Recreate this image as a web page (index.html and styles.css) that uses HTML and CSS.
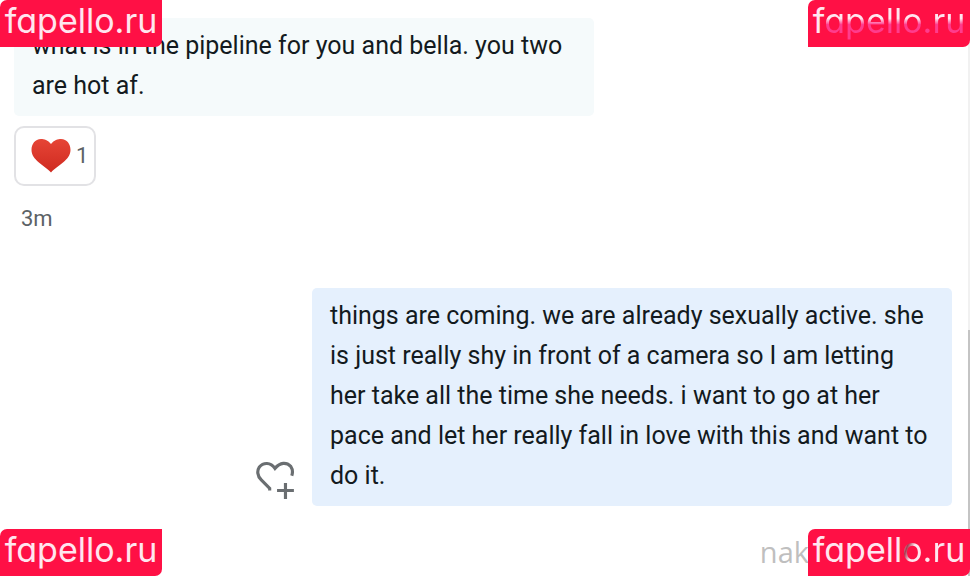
FILE: index.html
```
<!DOCTYPE html>
<html lang="en">
<head>
    <meta charset="UTF-8">
    <meta name="viewport" content="width=device-width, initial-scale=1.0">
    <title>Messages</title>
    <link rel="stylesheet" href="styles.css">
</head>
<body>
    <main class="chat">
        <div class="message received">
            <p class="bubble">what is in the pipeline for you and bella. you two are hot af.</p>
            <button class="reaction" type="button">
                <svg class="heart" viewBox="0 0 40 34" aria-hidden="true">
                    <defs>
                        <linearGradient id="heart-fill" x1="0" y1="0" x2="0" y2="1">
                            <stop offset="0" stop-color="#e64536"/>
                            <stop offset="1" stop-color="#cf2a20"/>
                        </linearGradient>
                    </defs>
                    <path fill="url(#heart-fill)" d="M20 5C23 1 27 0 30 0C36 0 39.500 5 39.500 11C39.500 21 27 26 20 33.500C13 26 .5 21 .5 11C.5 5 4 0 10 0C13 0 17 1 20 5Z"/>
                </svg>
                <span class="count">1</span>
            </button>
            <span class="time">3m</span>
        </div>
        <div class="message sent">
            <button class="like" type="button" aria-label="Add reaction">
                <svg viewBox="0 0 38 38" aria-hidden="true">
                    <path d="M13 28V26L5 18C1 14 1 9 3 6C7 1 14 1 18 7C23 1 29 1 33 5C35 8 35 11 34 14M28 21V36M20 28H36"/>
                </svg>
            </button>
            <p class="bubble">things are coming. we are already sexually active. she is just really shy in front of a camera so I am letting her take all the time she needs. i want to go at her pace and let her really fall in love with this and want to do it.</p>
        </div>
    </main>
    <div class="scrollbar"></div>
    <span class="watermark">nak</span>
    <span class="badge top left">fapello.ru</span>
    <span class="badge top right">f<span class="faded">apello.ru</span></span>
    <span class="badge bottom left">fapello.ru</span>
    <span class="badge bottom right">fapell<span class="smudged">o.r</span>u</span>
</body>
</html>
```

FILE: styles.css
```
* {
    box-sizing: border-box;
}
body {
    margin: 0;
    min-height: 100vh;
    position: relative;
    overflow: hidden;
    background-color: #fff;
    color: #131a20;
    font-family: Roboto, sans-serif;
    font-size: 25px;
    line-height: 40px;
}
button {
    background: none;
    border: none;
    padding: 0;
    font: inherit;
    cursor: pointer;
}
.chat {
    padding: 18px 18px 0 14px;
}
.message {
    display: flex;
}
.bubble {
    margin: 0;
    padding: 8px 18px 10px;
    border-radius: 5px;
}
.received {
    flex-direction: column;
    align-items: flex-start;
}
.received .bubble {
    max-width: 580px;
    background-color: #f5fafb;
}
.reaction {
    display: flex;
    align-items: center;
    gap: 5px;
    height: 60px;
    margin-top: 10px;
    padding: 0 6px 0 15px;
    border: 2px solid #e2e2e5;
    border-radius: 10px;
}
.heart {
    width: 40px;
    height: 34px;
}
.count, .time {
    color: #5c6266;
    font-size: 22px;
}
.time {
    margin: 13px 0 0 7px;
}
.sent {
    justify-content: flex-end;
    align-items: flex-end;
    gap: 16px;
    margin-top: 49px;
}
.sent .bubble {
    max-width: 640px;
    background-color: #e5f0fd;
}
.like {
    width: 40px;
    height: 40px;
    margin-bottom: 5px;
}
.like svg {
    display: block;
    width: 40px;
    height: 40px;
    fill: none;
    stroke: #6a6e71;
    stroke-width: 3;
}
.scrollbar {
    position: absolute;
    top: 0;
    right: 0;
    bottom: 0;
    width: 2px;
    background: linear-gradient(#f1f1f1 330px, #c4c4c4 330px);
}
.watermark {
    position: absolute;
    right: 161px;
    bottom: 4px;
    color: #bfbfbf;
    font-family: "Open Sans", sans-serif;
    font-size: 29px;
}
.badge {
    position: absolute;
    width: 162px;
    height: 47px;
    border-radius: 7px 0;
    background-color: #ff1045;
    color: #ffe6ef;
    font-family: Inter, sans-serif;
    font-feature-settings: "cv11";
    font-size: 34px;
    line-height: 41px;
    text-align: center;
}
.top {
    top: 0;
}
.bottom {
    bottom: 0;
}
.left {
    left: 0;
}
.right {
    right: 0;
}
.faded, .smudged {
    background: linear-gradient(#ffe6ef 45%, #ff3c8d 60%);
    background-clip: text;
    color: transparent;
}
.smudged {
    background-image: linear-gradient(110deg, #ffe6ef 10%, #a83a50 20%, #ffe6ef 32%, #ffe6ef 80%, #a83a50 90%, #ffe6ef);
}
```
